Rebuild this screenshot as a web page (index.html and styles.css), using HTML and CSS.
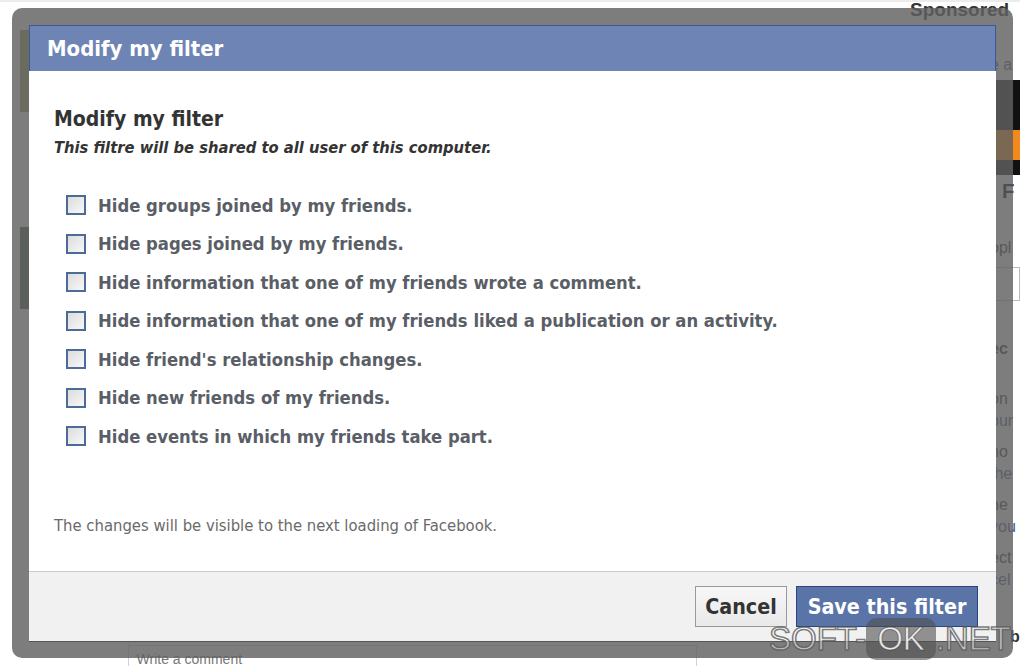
FILE: index.html
```html
<!DOCTYPE html>
<html>
<head>
<meta charset="utf-8">
<link rel="stylesheet" href="styles.css">
</head>
<body>
<div class="page">
  <div class="bg">
    <div class="bg-left">
      <div class="thumb olive"></div>
      <div class="thumb dark"></div>
    </div>
    <div class="bg-main">
      <div class="comment-box">Write a comment</div>
    </div>
    <div class="bg-right">
      <div class="sponsored">Sponsored</div>
      <div class="side-line link first">e a</div>
      <div class="ad-img"><span class="ad-orange"></span></div>
      <div class="ad-title">R F</div>
      <div class="side-line opl">opl</div>
      <div class="side-input"></div>
      <div class="side-line bold ec">ec</div>
      <div class="side-line on">on</div>
      <div class="side-line link">our</div>
      <div class="side-line gap">no</div>
      <div class="side-line link">the</div>
      <div class="side-line gap">he</div>
      <div class="side-line link">you</div>
      <div class="side-line gap">ect</div>
      <div class="side-line link">cel</div>
      <div class="side-line bold eb">b</div>
    </div>
  </div>

  <div class="overlay">
    <div class="dialog">
      <div class="dlg-header">Modify my filter</div>
      <div class="dlg-body">
        <h2 class="title">Modify my filter</h2>
        <p class="subtitle">This filtre will be shared to all user of this computer.</p>
        <ul class="options">
          <li class="option"><span class="box"></span><span>Hide groups joined by my friends.</span></li>
          <li class="option"><span class="box"></span><span>Hide pages joined by my friends.</span></li>
          <li class="option"><span class="box"></span><span>Hide information that one of my friends wrote a comment.</span></li>
          <li class="option"><span class="box"></span><span>Hide information that one of my friends liked a publication or an activity.</span></li>
          <li class="option"><span class="box"></span><span>Hide friend's relationship changes.</span></li>
          <li class="option"><span class="box"></span><span>Hide new friends of my friends.</span></li>
          <li class="option"><span class="box"></span><span>Hide events in which my friends take part.</span></li>
        </ul>
        <p class="note">The changes will be visible to the next loading of Facebook.</p>
      </div>
      <div class="dlg-footer">
        <button class="btn btn-cancel">Cancel</button>
        <button class="btn btn-save">Save this filter</button>
      </div>
    </div>
  </div>

  <div class="watermark"><span class="wm-text">SOFT-</span><span class="wm-ok">OK</span><span class="wm-text">.NET</span></div>
</div>
</body>
</html>
```

FILE: styles.css
```css
html, body {
  margin: 0;
  padding: 0;
  background: #ffffff;
}

.page {
  position: relative;
  width: 1020px;
  height: 666px;
  overflow: hidden;
  font-family: "DejaVu Sans Condensed", "DejaVu Sans", sans-serif;
}

/* ---------- background page ---------- */
.bg {
  display: flex;
  height: 666px;
  border-top: 2px solid #ececec;
  box-sizing: border-box;
}

.bg-left {
  width: 128px;
  padding: 28px 0 0 20px;
  box-sizing: border-box;
  display: flex;
  flex-direction: column;
  gap: 115px;
}

.thumb {
  width: 40px;
  height: 82px;
}
.thumb.olive { background: #9aa05a; }
.thumb.dark { background: #3e5a44; }

.bg-main {
  width: 572px;
  display: flex;
  flex-direction: column;
  justify-content: flex-end;
}

.comment-box {
  height: 16px;
  border: 1px solid #c9d2e3;
  border-bottom: none;
  padding: 4px 8px 0;
  font-family: "Liberation Sans", sans-serif;
  font-size: 14px;
  color: #777;
  line-height: 18px;
}

.bg-right {
  flex: 1;
  padding-left: 293px;
  font-family: "Liberation Sans", sans-serif;
  font-size: 16px;
  color: #333;
  white-space: nowrap;
}

.sponsored {
  margin-left: -80px;
  font-weight: bold;
  font-size: 19px;
  color: #333;
  line-height: 20px;
  margin-top: -3px;
  padding-top: 1px;
}

.side-line {
  line-height: 22px;
}
.side-line.first { margin-top: 34px; }
.side-line.link { color: #3b5998; }
.side-line.bold { font-weight: bold; }
.side-line.gap { margin-top: 9px; }
.side-line.opl { margin-top: 33px; }
.side-line.ec { margin-top: 37px; }
.side-line.on { margin-top: 28px; }
.side-line.eb { margin-top: 35px; margin-left: 20px; }

.ad-img {
  margin-top: 4px;
  height: 95px;
  background: #111;
  display: flex;
  align-items: flex-end;
}
.ad-orange {
  display: block;
  width: 30px;
  height: 30px;
  background: #f08a1c;
  margin-bottom: 15px;
}
.ad-title {
  margin-top: 3px;
  font-weight: bold;
  font-size: 20px;
  line-height: 26px;
  color: #000;
  margin-left: -8px;
}
.side-input {
  margin: 8px 0 0 -14px;
  height: 32px;
  border: 1px solid #bbb;
}

/* ---------- overlay + dialog ---------- */
.overlay {
  position: absolute;
  left: 12px;
  top: 8px;
  width: 1001px;
  height: 650px;
  box-sizing: border-box;
  padding: 17px;
  background: rgba(96, 96, 96, 0.82);
  border-radius: 10px;
}

.dialog {
  height: 100%;
  display: flex;
  flex-direction: column;
  background: #fff;
  border-bottom: 1px solid #555;
}

.dlg-header {
  height: 46px;
  box-sizing: border-box;
  background: #6d84b4;
  border: 1px solid #3b5998;
  border-bottom: none;
  color: #fff;
  font-weight: bold;
  font-size: 21.9px;
  line-height: 46px;
  padding-left: 17px;
}

.dlg-body {
  flex: 1;
  padding: 35px 25px 0;
  color: #333;
}

.title {
  margin: 0;
  font-size: 21px;
  line-height: 26px;
  font-weight: bold;
  color: #333;
}

.subtitle {
  margin: 6px 0 0;
  font-size: 16.4px;
  line-height: 20px;
  font-style: italic;
  font-weight: bold;
  color: #333;
}

.options {
  list-style: none;
  margin: 37px 0 0;
  padding: 0 0 0 12px;
  display: flex;
  flex-direction: column;
  gap: 18.5px;
}

.option {
  display: flex;
  align-items: center;
  gap: 12px;
  height: 20px;
  font-size: 18.3px;
  font-weight: bold;
  color: #5a5e66;
}

.box {
  width: 20px;
  height: 20px;
  box-sizing: border-box;
  border: 2px solid #4d6b98;
  background: linear-gradient(135deg, #dcdcdc, #f8f8f8);
  flex: none;
}

.note {
  margin: 71px 0 0;
  font-size: 16.5px;
  line-height: 18px;
  color: #6a6a6a;
}

.dlg-footer {
  height: 70px;
  box-sizing: border-box;
  background: #f1f1f1;
  border-top: 1px solid #ccc;
  display: flex;
  justify-content: flex-end;
  align-items: flex-start;
  gap: 9px;
  padding: 14px 18px 0 0;
}

.btn {
  height: 41px;
  box-sizing: border-box;
  font-family: "DejaVu Sans Condensed", "DejaVu Sans", sans-serif;
  font-size: 21.3px;
  font-weight: bold;
  padding: 0;
  margin: 0;
}

.btn-cancel {
  width: 92px;
  background: linear-gradient(#f7f7f7, #e9e9e9);
  border: 1px solid #999;
  color: #333;
}

.btn-save {
  width: 182px;
  background: #5b74a8;
  border: 1px solid #29447e;
  color: #fff;
}

/* ---------- watermark ---------- */
.watermark {
  position: absolute;
  left: 769px;
  top: 618px;
  display: flex;
  align-items: center;
  font-family: "Liberation Sans", sans-serif;
  font-size: 33px;
  line-height: 42px;
}
.wm-text {
  color: rgba(255, 255, 255, 0.55);
  -webkit-text-stroke: 1.5px rgba(90, 90, 90, 0.8);
}
.wm-ok {
  color: rgba(255, 255, 255, 0.85);
  background: rgba(80, 80, 80, 0.6);
  border-radius: 10px;
  padding: 0 11px;
  margin: 0;
  -webkit-text-stroke: 1px rgba(60, 60, 60, 0.6);
}
```
